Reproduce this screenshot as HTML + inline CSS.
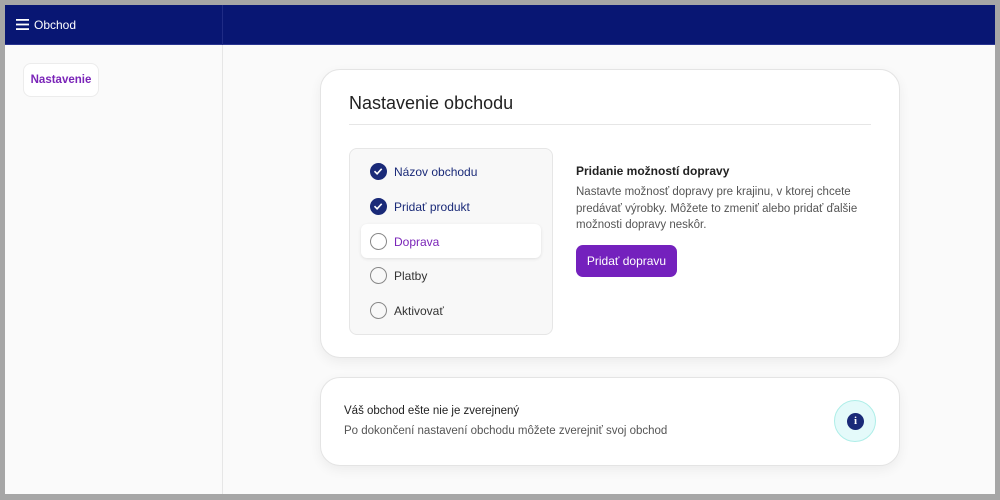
<!DOCTYPE html>
<html><head><meta charset="utf-8"><style>
*{box-sizing:border-box;margin:0;padding:0}
body{width:1000px;height:500px;background:#a6a6a6;font-family:"Liberation Sans",sans-serif;position:relative;overflow:hidden}
.frame{position:absolute;left:5px;top:5px;width:990px;height:489px;background:#fafafa;overflow:hidden}
.hdr{position:absolute;left:0;top:0;width:990px;height:40px;background:#081673;border-bottom:1px solid #2a3590}
.hdr .sep{position:absolute;left:217px;top:0;width:1px;height:40px;background:#1f2b85}
.hdr .t{position:absolute;left:29px;top:13px;color:#fff;font-size:12px}
.side{position:absolute;left:217px;top:40px;width:1px;height:449px;background:#e6e6e6}
.nav{position:absolute;left:18px;top:58px;width:76px;height:34px;background:#fff;border:1px solid #ececec;border-radius:8px;color:#7a24b8;font-weight:bold;font-size:11.5px;line-height:32px;text-align:center}
.card{position:absolute;background:#fff;border:1px solid #e4e4e4;border-radius:20px;box-shadow:0 4px 12px rgba(0,0,0,.06)}
h1{position:absolute;left:28px;top:23px;font-size:18px;font-weight:normal;color:#222}
.hr{position:absolute;left:28px;top:54px;width:522px;height:1px;background:#e6e6e6}
.steps{position:absolute;left:28px;top:78px;width:204px;height:187px;background:#f8f8f8;border:1px solid #e6e6e6;border-radius:8px}
.st{position:absolute;left:11px;width:180px;height:34px;font-size:12px;color:#333}
.st span{position:absolute;left:33px;top:11px}
.st .c{position:absolute;left:9px;top:9px;width:17px;height:17px;border-radius:50%;border:1.5px solid #888}
.st .d{background:#1a2a78;border-color:#1a2a78}
.act{background:#fff;border-radius:6px;box-shadow:0 1px 3px rgba(0,0,0,.1)}
.btn{position:absolute;left:255px;top:175px;width:101px;height:32px;background:#7421bd;border-radius:7px;color:#fff;font-size:12px;text-align:center;line-height:33px}
</style></head><body>
<div class="frame">
<div class="hdr"><div class="sep"></div>
<svg style="position:absolute;left:11px;top:14px" width="13" height="11"><rect y="0" width="13" height="1.8" fill="#fff"/><rect y="4.6" width="13" height="1.8" fill="#fff"/><rect y="9.2" width="13" height="1.8" fill="#fff"/></svg>
<div class="t">Obchod</div></div>
<div class="side"></div>
<div class="nav">Nastavenie</div>
<div class="card" style="left:315px;top:64px;width:580px;height:289px">
<h1>Nastavenie obchodu</h1><div class="hr"></div>
<div class="steps">
<div class="st" style="top:5px;color:#1a2a78"><div class="c d"><svg width="14" height="14" style="position:absolute;left:0;top:0"><path d="M3.5 7.2l2.6 2.6 4.6-5" stroke="#fff" stroke-width="1.6" fill="none"/></svg></div><span>Názov obchodu</span></div>
<div class="st" style="top:40px;color:#1a2a78"><div class="c d"><svg width="14" height="14" style="position:absolute;left:0;top:0"><path d="M3.5 7.2l2.6 2.6 4.6-5" stroke="#fff" stroke-width="1.6" fill="none"/></svg></div><span>Pridať produkt</span></div>
<div class="st act" style="top:75px;color:#7a24b8"><div class="c"></div><span>Doprava</span></div>
<div class="st" style="top:109px"><div class="c"></div><span>Platby</span></div>
<div class="st" style="top:144px"><div class="c"></div><span>Aktivovať</span></div>
</div>
<div style="position:absolute;left:255px;top:94px;font-size:12px;font-weight:bold;color:#222">Pridanie možností dopravy</div>
<div style="position:absolute;left:255px;top:114px;width:290px;font-size:11.5px;line-height:16.5px;color:#555">Nastavte možnosť dopravy pre krajinu, v ktorej chcete predávať výrobky. Môžete to zmeniť alebo pridať ďalšie možnosti dopravy neskôr.</div>
<div class="btn">Pridať dopravu</div>
</div>
<div class="card" style="left:315px;top:372px;width:580px;height:89px">
<div style="position:absolute;left:23px;top:27px;font-size:11.5px;color:#222">Váš obchod ešte nie je zverejnený</div>
<div style="position:absolute;left:23px;top:47px;font-size:11.5px;color:#555">Po dokončení nastavení obchodu môžete zverejniť svoj obchod</div>
<div style="position:absolute;left:513px;top:22px;width:42px;height:42px;border-radius:50%;background:#e4fafa;border:1px solid #aeeee8">
<div style="position:absolute;left:12px;top:12px;width:17px;height:17px;border-radius:50%;background:#1a2a78;color:#fff;font-size:11px;font-weight:bold;text-align:center;line-height:17px;font-family:'Liberation Serif',serif">i</div></div>
</div>
</div>
</body></html>
